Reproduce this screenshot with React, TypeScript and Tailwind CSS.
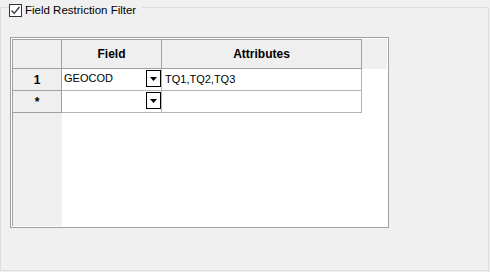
import React from "react";

type Row = { id: string; field: string; attrs: string };

const rows: Row[] = [
  { id: "1", field: "GEOCOD", attrs: "TQ1,TQ2,TQ3" },
  { id: "*", field: "", attrs: "" },
];

function DropButton() {
  return (
    <div className="w-[15px] h-[17px] border border-black bg-white flex items-center justify-center shrink-0">
      <svg width="7" height="4" viewBox="0 0 7 4">
        <path d="M0 0 H7 L3.5 4 Z" fill="#000" />
      </svg>
    </div>
  );
}

function App() {
  return (
    <div
      className="w-[490px] h-[272px] bg-[#f0f0f0] pt-[7px] text-black"
      style={{ fontFamily: '"Liberation Sans", Arial, sans-serif' }}
    >
      {/* group box */}
      <div className="relative w-[489px] h-[264px] border border-[#dcdcdc] pl-[9px] pt-[29px]">
        {/* legend with checkbox */}
        <div className="absolute left-[8px] top-[-5px] h-[15px] flex items-center gap-[3px] pr-[6px] bg-[#f0f0f0]">
          <div className="w-[13px] h-[13px] border border-[#333333] bg-white flex items-center justify-center">
            <svg width="11" height="11" viewBox="0 0 11 11">
              <path d="M1.5 5.5 L4.2 8.3 L9.5 2" fill="none" stroke="#333333" strokeWidth="1.3" />
            </svg>
          </div>
          <span className="text-[11.5px] leading-none">Field Restriction Filter</span>
        </div>

        {/* grid */}
        <div className="w-[379px] h-[191px] border border-[#a0a0a0] bg-white p-[1px]">
          <div className="h-full flex flex-col">
            {/* header */}
            <div className="h-[30px] flex bg-[#efefef] shrink-0">
              <div className="w-[50px] border border-[#a0a0a0]" />
              <div className="w-[100px] border-y border-r border-[#a0a0a0] flex items-center justify-center text-[12px] font-bold">
                Field
              </div>
              <div className="w-[200px] border-y border-r border-[#a0a0a0] flex items-center justify-center text-[12px] font-bold">
                Attributes
              </div>
            </div>

            {/* rows */}
            {rows.map((r) => (
              <div key={r.id} className="h-[22px] flex shrink-0 text-[11px]">
                <div className="w-[50px] bg-[#efefef] border-l border-r border-b border-[#a0a0a0] flex items-center justify-center text-[12px] font-bold">
                  {r.id}
                </div>
                <div className="w-[100px] border-r border-b border-[#b4b4b4] flex items-start pt-[1px] pl-[2px]">
                  <span className="flex-1 h-[17px] flex items-center">{r.field}</span>
                  <DropButton />
                </div>
                <div className="w-[200px] border-r border-b border-[#b4b4b4] flex items-center pl-[3px]">
                  {r.attrs}
                </div>
              </div>
            ))}

            {/* empty area */}
            <div className="flex-1 flex">
              <div className="w-[50px] bg-[#efefef] border-l border-[#a0a0a0]" />
            </div>
          </div>
        </div>
      </div>
    </div>
  );
}

export default App;
